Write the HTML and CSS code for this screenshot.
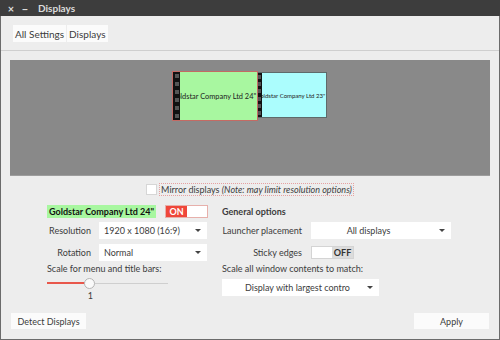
FILE: index.html
```html
<!DOCTYPE html>
<html lang="en">
<head>
  <meta charset="UTF-8" />
  <title>Displays</title>
  <link rel="stylesheet" href="styles.css">
</head>
<body>
  <div class="window">
    <div class="titlebar">
      <span class="tb-btn">×</span>
      <span class="tb-btn">−</span>
      <span class="tb-title">Displays</span>
    </div>

    <div class="headerbar">
      <div class="crumbs">
        <button class="crumb">All Settings</button>
        <button class="crumb">Displays</button>
      </div>
    </div>

    <div class="content">
      <div class="preview">
        <div class="monitor mon-main">
          <span class="mon-name">Goldstar Company Ltd 24"</span>
          <div class="strip"><i></i><i></i><i></i><i></i><i></i><i></i></div>
        </div>
        <div class="monitor mon-second">
          <span class="mon-name">Goldstar Company Ltd 23"</span>
          <div class="strip"><i></i><i></i><i></i><i></i><i></i><i></i></div>
        </div>
      </div>

      <div class="mirror-row">
        <span class="check"></span>
        <span class="mirror-label">Mirror displays <em>(Note: may limit resolution options)</em></span>
      </div>

      <div class="options">
        <div class="col col-left">
          <div class="row head-row">
            <span class="mon-title">Goldstar Company Ltd 24"</span>
            <span class="switch on"><b>ON</b><span></span></span>
          </div>
          <div class="row">
            <span class="label">Resolution</span>
            <div class="combo w-res">1920 x 1080 (16:9)<span class="arrow"></span></div>
          </div>
          <div class="row last">
            <span class="label">Rotation</span>
            <div class="combo w-res">Normal<span class="arrow"></span></div>
          </div>
          <div class="plain">Scale for menu and title bars:</div>
          <div class="slider">
            <div class="track"><div class="fill" style="width: 42px"></div></div>
            <span class="knob"></span>
          </div>
          <div class="slider-val">1</div>
        </div>

        <div class="col col-right">
          <div class="row head-row">
            <span class="section">General options</span>
          </div>
          <div class="row">
            <span class="label wide">Launcher placement</span>
            <div class="combo w-launch centered">All displays<span class="arrow"></span></div>
          </div>
          <div class="row last">
            <span class="label wide">Sticky edges</span>
            <span class="switch off"><span></span><b>OFF</b></span>
          </div>
          <div class="plain">Scale all window contents to match:</div>
          <div class="combo w-scale"><span class="clip-text">Display with largest contro</span><span class="arrow"></span></div>
        </div>
      </div>

      <div class="footer">
        <button class="btn">Detect Displays</button>
        <button class="btn btn-apply">Apply</button>
      </div>
    </div>
  </div>
</body>
</html>
```

FILE: styles.css
```css
body {
  margin: 0;
  font-family: "Lato", "Noto Sans", sans-serif;
  font-size: 9px;
  color: #3c3c3c;
}

.window {
  width: 500px;
  height: 340px;
  box-sizing: border-box;
  background: #ededed;
  border: 1px solid #6b6b6b;
  border-top: none;
  display: flex;
  flex-direction: column;
}

.titlebar {
  height: 16px;
  margin: 0 -1px;
  background: #3d3d3d;
  display: flex;
  align-items: center;
  padding-left: 4px;
  color: #dcdcdc;
}

.tb-btn {
  width: 14px;
  font-size: 11px;
  font-weight: bold;
  text-align: center;
}

.tb-title {
  margin-left: 6px;
  font-weight: bold;
  font-size: 10px;
}

.headerbar {
  height: 35px;
  box-sizing: border-box;
  border-bottom: 1px solid #cfcfcf;
  display: flex;
  align-items: center;
  padding-left: 12px;
}

.crumbs {
  display: flex;
  gap: 1px;
  margin-top: 1px;
}

.crumb {
  font: inherit;
  font-size: 10px;
  color: #3c3c3c;
  background: #fbfbfb;
  border: none;
  padding: 0 2px;
  height: 17px;
}

.content {
  flex: 1;
  display: flex;
  flex-direction: column;
  padding: 9px 9px 0;
}

.preview {
  position: relative;
  height: 116px;
  background: #898989;
  border-bottom: 1px solid #9d9d9d;
  box-sizing: border-box;
}

.monitor {
  position: absolute;
  display: flex;
  align-items: center;
  justify-content: center;
  box-sizing: border-box;
  overflow: hidden;
}

.mon-main {
  left: 162px;
  top: 11px;
  width: 86px;
  height: 50px;
  background: #a8f7a0;
  border: 1px solid #c46a64;
  z-index: 2;
}

.mon-second {
  left: 245px;
  top: 12px;
  width: 72px;
  height: 46px;
  background: #abfdfd;
  border: 1px solid #5e6a6a;
}

.strip {
  position: absolute;
  left: 0;
  top: 0;
  bottom: 0;
  width: 7px;
  background: #111;
  display: flex;
  flex-direction: column;
  justify-content: space-between;
  align-items: center;
  padding: 2px 0;
  box-sizing: border-box;
}

.strip i {
  width: 4px;
  height: 4px;
  background: #555;
}

.mon-name {
  flex: none;
  white-space: nowrap;
  color: #222;
  font-size: 7.4px;
  margin-left: -3px;
}

.mon-second .strip {
  width: 6px;
}

.mon-second .mon-name {
  font-size: 6px;
  margin-left: -1px;
}

.mirror-row {
  display: flex;
  align-items: center;
  justify-content: center;
  margin-top: 7px;
  height: 12px;
}

.check {
  width: 9px;
  height: 9px;
  background: #fff;
  border: 1px solid #d6d6d6;
  margin-right: 2px;
}

.mirror-label {
  border: 1px dotted #e6a0a0;
  padding: 0 1px;
}

.options {
  display: flex;
  margin-top: 10px;
  padding-left: 37px;
}

.col {
  display: flex;
  flex-direction: column;
}

.col-left {
  width: 175px;
}

.row {
  display: flex;
  align-items: center;
  height: 17px;
  margin-bottom: 5px;
}

.row.last {
  margin-bottom: 2px;
}

.head-row {
  height: 13px;
  margin-bottom: 4px;
}

.mon-title {
  background: #a8f7a0;
  font-weight: bold;
  color: #111;
  padding: 0 2px;
  line-height: 13px;
  margin-right: 9px;
}

.section {
  font-weight: bold;
}

.switch {
  display: flex;
  width: 43px;
  height: 13px;
  box-sizing: border-box;
  border: 1px solid #d4d4d4;
  background: #fff;
}

.switch b {
  width: 21px;
  font-size: 9px;
  text-align: center;
  line-height: 11px;
}

.switch span {
  flex: 1;
}

.switch.on {
  border-color: #e7b0ab;
}

.switch.on b {
  background: #ef473a;
  color: #fff;
}

.switch.off b {
  background: #dcdcdc;
  color: #333;
}

.label {
  width: 44px;
  text-align: right;
  margin-right: 8px;
}

.label.wide {
  width: 80px;
  margin-right: 9px;
}

.combo {
  position: relative;
  height: 17px;
  background: #fff;
  display: flex;
  align-items: center;
  padding-left: 5px;
  box-sizing: border-box;
}

.w-res {
  width: 108px;
}

.w-launch {
  width: 140px;
}

.w-scale {
  width: 157px;
  margin-top: 5px;
}

.centered {
  justify-content: center;
  padding-right: 30px;
}

.clip-text {
  display: block;
  width: 108px;
  overflow: hidden;
  white-space: nowrap;
  margin-left: 18px;
}

.arrow {
  position: absolute;
  right: 6px;
  top: 7px;
  border: 3px solid transparent;
  border-top: 3px solid #444;
  border-bottom: none;
  width: 0;
}

.slider {
  position: relative;
  width: 121px;
  height: 12px;
  margin-top: 3px;
  display: flex;
  align-items: center;
}

.track {
  width: 100%;
  height: 1px;
  background: #cfcfcf;
}

.fill {
  height: 2px;
  background: #e8574b;
  margin-top: -1px;
}

.knob {
  position: absolute;
  left: 37px;
  top: 1px;
  width: 9px;
  height: 9px;
  border-radius: 50%;
  background: #fafafa;
  border: 1px solid #b5b5b5;
}

.slider-val {
  width: 46px;
  text-align: right;
  margin-top: 1px;
}

.footer {
  display: flex;
  justify-content: space-between;
  margin-top: auto;
  margin-bottom: 10px;
  padding: 0 1px;
}

.btn {
  font: inherit;
  color: #3c3c3c;
  background: #fbfbfb;
  border: none;
  height: 16px;
  width: 75px;
  padding: 0;
}
```
